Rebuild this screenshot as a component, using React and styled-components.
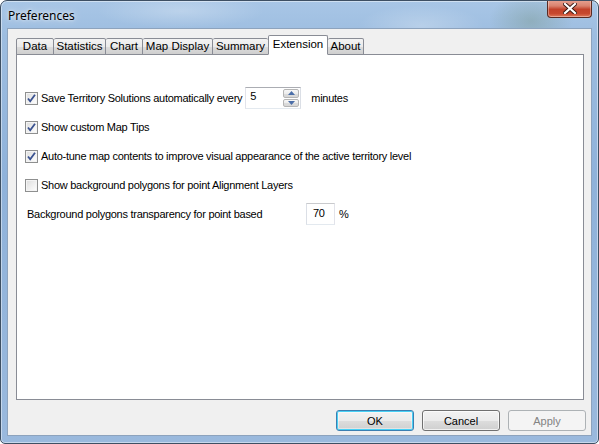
import React from "react";
import styled, { createGlobalStyle, css } from "styled-components";

const Global = createGlobalStyle`
  html, body { margin: 0; padding: 0; background: #ffffff; }
  body { width: 599px; height: 444px; overflow: hidden; }
`;

const Window = styled.div`
  box-sizing: border-box;
  width: 599px;
  height: 444px;
  border: 1px solid #3d4f63;
  border-radius: 7px 7px 5px 5px;
  background:
    radial-gradient(ellipse 60px 40px at 530px 20px, rgba(110,140,120,0.35), transparent 70%),
    radial-gradient(ellipse 90px 30px at 420px 25px, rgba(255,255,255,0.25), transparent 70%),
    radial-gradient(ellipse 120px 25px at 180px 10px, rgba(255,255,255,0.25), transparent 70%),
    linear-gradient(180deg, #a8c6e6 0%, #9dbde0 8%, #8fb2da 40%, #9ab9dd 100%);
  display: flex;
  flex-direction: column;
  overflow: hidden;
  font-family: "Liberation Sans", Arial, sans-serif;
  box-shadow: inset 0 0 0 1px rgba(255,255,255,0.45);
`;

const TitleBar = styled.div`
  height: 27px;
  display: flex;
  align-items: flex-start;
  justify-content: space-between;
  padding: 0 6px 0 7px;
`;

const Title = styled.div`
  font-family: "Noto Sans", "Open Sans", sans-serif;
  font-size: 12px;
  line-height: 12px;
  color: #000;
  padding-top: 9px;
  text-shadow: 0 0 8px rgba(255,255,255,0.9), 0 0 3px rgba(255,255,255,0.8);
`;

const CloseButton = styled.div`
  width: 45px;
  height: 18px;
  margin-top: -1px;
  box-sizing: border-box;
  border: 1px solid #5a2a22;
  border-top: none;
  border-radius: 0 0 4px 4px;
  background: linear-gradient(180deg, #e8a493 0%, #d9826e 35%, #c2422a 55%, #c7482f 80%, #e07a5c 100%);
  box-shadow: inset 0 0 0 1px rgba(255,255,255,0.35);
  display: flex;
  align-items: center;
  justify-content: center;
`;

const Client = styled.div`
  flex: 1;
  margin: 0 6px 7px 6px;
  background: #f0f0f0;
  border: 1px solid #8da3bd;
  display: flex;
  flex-direction: column;
  padding: 6px 7px 4px 8px;
`;

const TabStrip = styled.div`
  display: flex;
  align-items: flex-end;
  height: 20px;
  position: relative;
  z-index: 2;
  margin-bottom: -1px;
`;

const Tab = styled.div`
  box-sizing: border-box;
  height: ${p => (p.$active ? "20px" : "17px")};
  width: ${p => p.$w}px;
  display: flex;
  align-items: center;
  justify-content: center;
  font-family: "Liberation Sans", Arial, sans-serif;
  font-size: 11.5px;
  color: #000;
  white-space: nowrap;
  border: 1px solid #898c95;
  border-left-width: ${p => (p.$first || p.$active ? "1px" : "0")};
  border-right-width: ${p => (p.$beforeActive ? "0" : "1px")};
  border-bottom: ${p => (p.$active ? "1px solid #ffffff" : "1px solid #898c95")};
  border-radius: 2px 2px 0 0;
  background: ${p =>
    p.$active ? "#ffffff" : "linear-gradient(180deg, #f3f3f3 0%, #ebebeb 50%, #dddddd 51%, #cfcfcf 100%)"};
  position: relative;
  z-index: ${p => (p.$active ? 3 : 1)};
  padding-bottom: ${p => (p.$active ? "3px" : "1px")};
`;

const Panel = styled.div`
  box-sizing: border-box;
  height: 346px;
  background: #ffffff;
  border: 1px solid #898c95;
  padding: 32px 0 0 8px;
  display: flex;
  flex-direction: column;
  gap: 7px;
`;

const Row = styled.div`
  height: 22px;
  display: flex;
  align-items: center;
  font-size: 11px;
  color: #000;
  letter-spacing: -0.27px;
  white-space: nowrap;
`;

const Box = styled.div`
  box-sizing: border-box;
  width: 13px;
  height: 13px;
  border: 1px solid #8e8f8f;
  background: linear-gradient(135deg, #dcdcdc 0%, #f2f2f2 60%, #ffffff 100%);
  box-shadow: inset 0 0 0 1px #f4f4f4;
  margin-right: 3px;
  display: flex;
  align-items: center;
  justify-content: center;
  flex: none;
`;

const Check = () => (
  <svg width="11" height="11" viewBox="0 0 11 11">
    <path d="M2 5.5 L4.2 8.3 L9 1.8" fill="none" stroke="#3a5290" strokeWidth="1.8" strokeLinejoin="miter" />
  </svg>
);

const CheckBox = ({ checked }) => <Box>{checked && <Check />}</Box>;

const Spinner = styled.div`
  box-sizing: border-box;
  width: 56px;
  height: 22px;
  margin-left: 3px;
  border: 1px solid #abadb3;
  border-color: #abadb3 #dbdfe6 #e3e9ef #e2e3ea;
  background: #fff;
  display: flex;
  align-items: stretch;
`;

const SpinValue = styled.div`
  flex: 1;
  padding: 2px 0 0 4px;
  font-size: 11px;
`;

const SpinButtons = styled.div`
  width: 16px;
  display: flex;
  flex-direction: column;
  padding: 1px 1px 1px 0;
  gap: 1px;
`;

const SpinHalf = styled.div`
  flex: 1;
  box-sizing: border-box;
  border: 1px solid #b5b5b5;
  border-radius: 2px;
  background: linear-gradient(180deg, #f7f7f7 0%, #ececec 50%, #dcdcdc 51%, #d6d6d6 100%);
  display: flex;
  align-items: center;
  justify-content: center;
`;

const Arrow = ({ up }) => (
  <svg width="7" height="4" viewBox="0 0 7 4">
    <path d={up ? "M0 4 L3.5 0 L7 4 Z" : "M0 0 L3.5 4 L7 0 Z"} fill="#4b6ea8" />
  </svg>
);

const Unit = styled.span`
  margin-left: ${p => p.$ml}px;
`;

const Label = styled.span`
  padding-left: 2px;
  width: ${p => p.$w}px;
  flex: none;
`;

const NumBox = styled.div`
  box-sizing: border-box;
  width: 29px;
  height: 22px;
  border: 1px solid #abadb3;
  border-color: #c9cacd #e2e3ea #e3e9ef #dbdfe6;
  background: #fff;
  padding: 3px 0 0 6px;
  font-size: 11px;
`;

const ButtonBar = styled.div`
  flex: 1;
  display: flex;
  justify-content: flex-end;
  align-items: flex-end;
  gap: 8px;
  margin-right: -2px;
`;

const Button = styled.div`
  box-sizing: border-box;
  width: 78px;
  height: 21px;
  border-radius: 3px;
  display: flex;
  align-items: center;
  justify-content: center;
  font-size: 11px;
  ${p =>
    p.$disabled
      ? css`
          border: 1px solid #adb2b5;
          background: #f4f4f4;
          color: #838383;
        `
      : p.$default
      ? css`
          border: 1px solid #3c7fb1;
          color: #000;
          background: linear-gradient(180deg, #f2f2f2 0%, #ebebeb 50%, #dddddd 51%, #cfcfcf 100%);
          box-shadow: inset 0 0 0 1px #48d0f5, inset 0 0 0 2px rgba(255,255,255,0.4);
        `
      : css`
          border: 1px solid #707070;
          background: linear-gradient(180deg, #f2f2f2 0%, #ebebeb 50%, #dddddd 51%, #cfcfcf 100%);
          box-shadow: inset 0 0 0 1px rgba(255,255,255,0.7);
          color: #000;
        `}
`;

const CloseX = () => (
  <svg width="14" height="11" viewBox="0 0 14 11">
    <path d="M2 1 L12 10 M12 1 L2 10" stroke="#3a1a14" strokeWidth="4" strokeLinecap="square" />
    <path d="M2 1 L12 10 M12 1 L2 10" stroke="#ffffff" strokeWidth="2.2" strokeLinecap="square" />
  </svg>
);

const tabs = [
  { t: "Data", w: 38 },
  { t: "Statistics", w: 52 },
  { t: "Chart", w: 37 },
  { t: "Map Display", w: 70 },
  { t: "Summary", w: 55 },
  { t: "Extension", w: 60, active: true },
  { t: "About", w: 36 },
];

export default function App() {
  return (
    <>
      <Global />
      <Window>
        <TitleBar>
          <Title>Preferences</Title>
          <CloseButton>
            <CloseX />
          </CloseButton>
        </TitleBar>
        <Client>
          <TabStrip>
            {tabs.map((tb, i) => (
              <Tab
                key={tb.t}
                $w={tb.w}
                $active={tb.active}
                $first={i === 0}
                $beforeActive={tabs[i + 1] && tabs[i + 1].active}
              >
                {tb.t}
              </Tab>
            ))}
          </TabStrip>
          <Panel>
            <Row>
              <CheckBox checked />
              <span>Save Territory Solutions automatically every</span>
              <Spinner>
                <SpinValue>5</SpinValue>
                <SpinButtons>
                  <SpinHalf><Arrow up /></SpinHalf>
                  <SpinHalf><Arrow /></SpinHalf>
                </SpinButtons>
              </Spinner>
              <Unit $ml={10}>minutes</Unit>
            </Row>
            <Row>
              <CheckBox checked />
              <span>Show custom Map Tips</span>
            </Row>
            <Row>
              <CheckBox checked />
              <span>Auto-tune map contents to improve visual appearance of the active territory level</span>
            </Row>
            <Row>
              <CheckBox />
              <span>Show background polygons for point Alignment Layers</span>
            </Row>
            <Row>
              <Label $w={279}>Background polygons transparency for point based</Label>
              <NumBox>70</NumBox>
              <Unit $ml={4}>%</Unit>
            </Row>
          </Panel>
          <ButtonBar>
            <Button $default>OK</Button>
            <Button>Cancel</Button>
            <Button $disabled>Apply</Button>
          </ButtonBar>
        </Client>
      </Window>
    </>
  );
}
